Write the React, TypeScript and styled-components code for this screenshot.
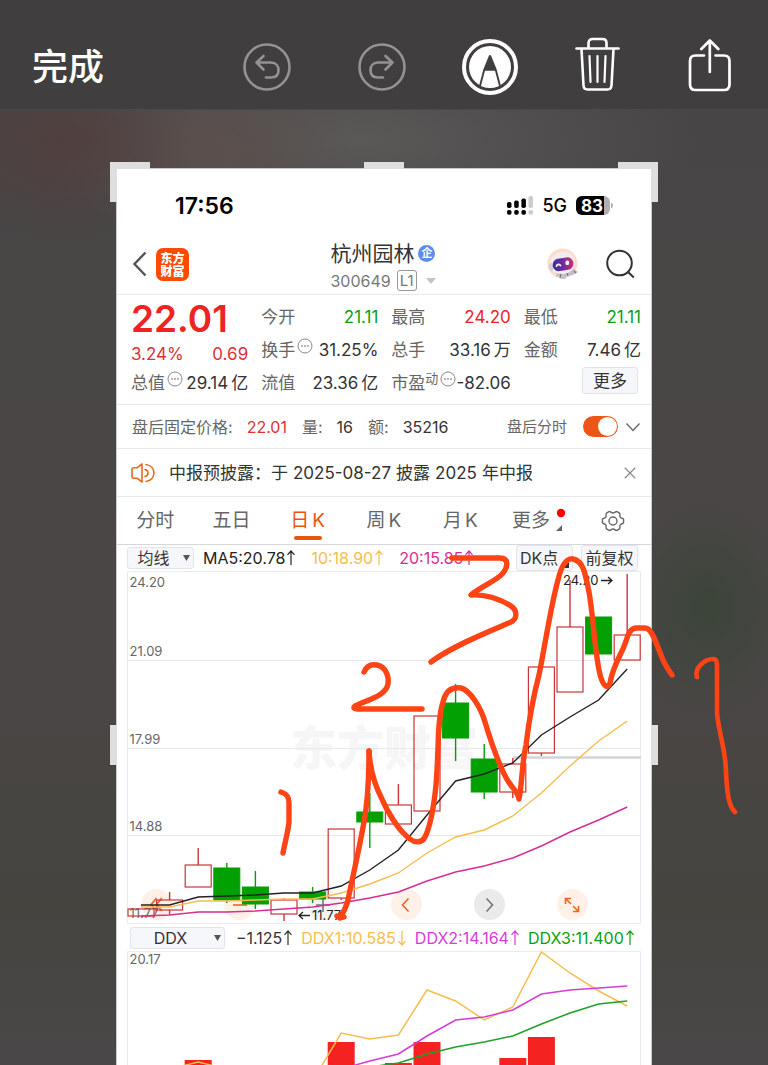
import React from "react";
import styled, { createGlobalStyle, css } from "styled-components";

const GlobalStyle = createGlobalStyle`
  *, *::before, *::after { box-sizing: border-box; }
  body {
    margin: 0;
    background: #464545;
    font-family: Inter, "Noto Sans CJK SC", sans-serif;
    color: #333;
  }
  button, select, input { font: inherit; color: inherit; margin: 0; }
`;

const RED = "#ef2224";
const GREEN = "#0aa010";
const ORANGE = "#ee5518";
const YELLOW = "#f6bd4e";
const MAGENTA = "#d52d96";
const VIOLET = "#d63bd8";
const INK = "#fe4415";

/* ---------- Editor shell ---------- */

const Page = styled.div`
  position: relative;
  min-height: 100vh;
  display: flex;
  flex-direction: column;
  overflow: hidden;
  background:
    radial-gradient(ellipse 90px 110px at 92% 57%, #3b4539 0%, transparent 100%),
    radial-gradient(ellipse 130px 100px at 8% 140px, #503f3e 0%, transparent 100%),
    radial-gradient(ellipse 150px 90px at 27% 150px, #5b4f4c 0%, transparent 100%),
    radial-gradient(ellipse 340px 120px at 46% 140px, #5a5958 0%, transparent 100%),
    linear-gradient(#474545 0, #4a4646 60%, #45443f 85%, #4a4748 100%);
`;

const Toolbar = styled.header`
  display: flex;
  align-items: center;
  height: 110px;
  padding: 24px 30px 0 32px;
  background: #403e3e;
  border-bottom: 1px solid #4b4a4a;
  color: #fff;
`;

const PlainButton = styled.button`
  display: flex;
  align-items: center;
  justify-content: center;
  padding: 0;
  border: 0;
  background: none;
  cursor: pointer;
`;

const DoneButton = styled(PlainButton)`
  margin-right: auto;
  font-size: 36px;
  line-height: 44px;
  font-weight: 500;
`;

const History = styled.div`
  display: flex;
  gap: 67px;
  margin-right: 56px;
  color: #949393;
`;

const Tools = styled.div`
  display: flex;
  gap: 54px;
`;

const Stage = styled.main`
  flex: 1;
  display: flex;
  padding: 59px 117px 0;
`;

const Phone = styled.article`
  position: relative;
  flex: 1;
  min-width: 0;
  display: flex;
  flex-direction: column;
  background: #fff;
  box-shadow: 0 0 0 1px #c9c8c8;
`;

const Handle = styled.span<{ $at: "tl" | "tr" | "top" | "left" | "right" }>`
  position: absolute;
  border: 0 solid #dfdede;
  ${({ $at }) =>
    $at === "tl" && css`left: -7px; top: -7px; width: 40px; height: 40px; border-width: 7px 0 0 7px;`}
  ${({ $at }) =>
    $at === "tr" && css`right: -7px; top: -7px; width: 40px; height: 40px; border-width: 7px 7px 0 0;`}
  ${({ $at }) =>
    $at === "top" && css`left: calc(50% - 20px); top: -7px; width: 40px; border-width: 7px 0 0;`}
  ${({ $at }) =>
    $at === "left" && css`left: -7px; top: 556px; height: 40px; border-width: 0 0 0 7px;`}
  ${({ $at }) =>
    $at === "right" && css`right: -7px; top: 556px; height: 40px; border-width: 0 7px 0 0;`}
`;

const Ink = styled.svg`
  position: absolute;
  inset: 0;
  width: 100%;
  height: auto;
  pointer-events: none;
`;

/* ---------- Phone header ---------- */

const StatusBar = styled.div`
  display: flex;
  align-items: center;
  justify-content: space-between;
  height: 65px;
  padding: 8px 38px 0 58px;
  color: #000;
`;

const Clock = styled.span`
  font-size: 23px;
  line-height: 28px;
  font-weight: 600;
`;

const Signals = styled.div`
  display: flex;
  align-items: center;
  gap: 9px;
  font-size: 18px;
  line-height: 24px;
  font-weight: 500;
`;

const Battery = styled.span`
  position: relative;
  width: 34px;
  height: 19px;
  border-radius: 6px;
  background: linear-gradient(90deg, #000 82%, #b0b0b0 82%);
  color: #fff;
  font-size: 17px;
  line-height: 20px;
  font-weight: 700;
  padding-left: 5px;
  margin-right: 3px;
  &::after {
    content: "";
    position: absolute;
    right: -3px;
    top: 7px;
    width: 2px;
    height: 5px;
    border-radius: 0 2px 2px 0;
    background: #b0b0b0;
  }
`;

const Rule = css`border-bottom: 1px solid #e9e9ed;`;

const TitleBar = styled.header`
  display: flex;
  align-items: center;
  height: 61px;
  padding: 0 16px 0 15px;
  ${Rule}
`;

const Side = styled.div<{ $end?: boolean }>`
  flex: 1;
  display: flex;
  align-items: center;
  gap: ${({ $end }) => ($end ? 28 : 9)}px;
  justify-content: ${({ $end }) => ($end ? "flex-end" : "flex-start")};
`;

const Logo = styled.span`
  width: 33px;
  height: 33px;
  border-radius: 7px;
  background: #fe4a05;
  color: #fff;
  font-size: 12px;
  line-height: 13px;
  font-weight: 900;
  padding-top: 4px;
  text-align: center;
`;

const Stock = styled.div`
  display: flex;
  flex-direction: column;
  padding-top: 5px;
`;

const StockName = styled.h1`
  display: flex;
  align-items: center;
  gap: 4px;
  margin: 0;
  font-size: 21px;
  line-height: 28px;
  font-weight: 400;
`;

const Badge = styled.span`
  width: 17px;
  height: 17px;
  border-radius: 50%;
  background: #5f8ee9;
  color: #fff;
  font-size: 11px;
  line-height: 16px;
  font-weight: 700;
  text-align: center;
`;

const StockCode = styled.div`
  display: flex;
  align-items: center;
  gap: 6px;
  font-size: 16px;
  line-height: 26px;
  color: #777;
`;

const Level = styled.span`
  border: 1px solid #999;
  border-radius: 3px;
  padding: 0 2px;
  font-size: 15px;
  line-height: 19px;
`;

/* ---------- Quote ---------- */

const Quote = styled.section`
  display: grid;
  grid-template-columns: repeat(4, 1fr);
  gap: 13px;
  height: 110px;
  padding: 5px 10px 0 14px;
  ${Rule}
`;

const QuoteColumn = styled.div`
  display: flex;
  flex-direction: column;
`;

const Cell = styled.div<{ $tone?: string }>`
  display: flex;
  align-items: center;
  justify-content: space-between;
  height: 33px;
  font-size: 17px;
  line-height: 24px;
  white-space: nowrap;
  color: ${({ $tone }) => $tone ?? "#333"};
`;

const Label = styled.span`
  color: #666;
  display: flex;
  align-items: center;
`;

const Unit = styled.span`
  margin-left: 3px;
`;

const Super = styled.sup`
  font-size: 13px;
  line-height: 14px;
  align-self: flex-start;
`;

const Price = styled.strong`
  height: 38px;
  font-size: 37px;
  line-height: 38px;
  font-weight: 600;
  color: ${RED};
`;

const Change = styled(Cell)`
  height: 28px;
  color: #e03034;
  padding-top: 4px;
`;

const Chip = styled.button<{ $wide?: boolean; $marked?: boolean }>`
  position: relative;
  display: flex;
  align-items: center;
  justify-content: center;
  border: 1px solid #e2e4ea;
  border-radius: 3px;
  background: #f6f7fb;
  padding: 0;
  cursor: pointer;
  color: #333;
  ${({ $wide }) =>
    $wide
      ? css`width: 56px; height: 27px; margin: 1px 3px 0 auto; font-size: 17px; line-height: 24px;`
      : css`width: 57px; height: 26px; font-size: 16px; line-height: 22px;`}
  ${({ $marked }) =>
    $marked &&
    css`
      justify-content: flex-start;
      padding-left: 3px;
      &::after {
        content: "";
        position: absolute;
        right: 3px;
        bottom: 2px;
        border: 3px solid #333;
        border-left-color: transparent;
        border-top-color: transparent;
      }
    `}
`;

/* ---------- After hours / notice ---------- */

const AfterHours = styled.section`
  display: flex;
  align-items: center;
  height: 44px;
  padding: 0 10px 0 15px;
  font-size: 16px;
  line-height: 22px;
  color: #666;
  white-space: nowrap;
  ${Rule}
`;

const Figure = styled.span<{ $tone?: string }>`
  margin: 0 15px 0 14px;
  color: ${({ $tone }) => $tone ?? "#333"};
`;

const SwitchLabel = styled.label`
  display: flex;
  align-items: center;
  gap: 16px;
  margin: 0 7px 0 auto;
  font-size: 15px;
`;

const Switch = styled.input`
  appearance: none;
  display: flex;
  width: 35px;
  height: 21px;
  padding: 1px;
  border-radius: 11px;
  background: ${ORANGE};
  cursor: pointer;
  &::before {
    content: "";
    width: 19px;
    height: 19px;
    margin-left: auto;
    border-radius: 50%;
    background: #fff;
  }
  &:not(:checked) { background: #ccc; }
  &:not(:checked)::before { margin-left: 0; }
`;

const Notice = styled.section`
  display: flex;
  align-items: center;
  height: 48px;
  padding: 0 15px 0 14px;
  font-size: 17px;
  line-height: 24px;
  white-space: nowrap;
  ${Rule}
`;

const NoticeText = styled.p`
  flex: 1;
  margin: 0 0 0 13px;
`;

const CloseButton = styled(PlainButton)`
  color: #888;
`;

const Num = styled.span`
  margin: 0 5px;
`;

/* ---------- Tabs ---------- */

const Tabs = styled.nav`
  display: grid;
  grid-template-columns: repeat(7, 1fr);
  height: 48px;
  border-bottom: 1px solid #d6d6de;
`;

const Tab = styled.button<{ $active?: boolean }>`
  position: relative;
  display: flex;
  align-items: center;
  justify-content: center;
  gap: 3px;
  padding: 0;
  border: 0;
  background: none;
  font-size: 19px;
  line-height: 26px;
  cursor: pointer;
  color: ${({ $active }) => ($active ? "#e8560e" : "#666")};
  ${({ $active }) =>
    $active &&
    css`
      &::after {
        content: "";
        position: absolute;
        bottom: 4px;
        width: 28px;
        height: 4px;
        border-radius: 2px;
        background: #e8560e;
      }
    `}
`;

const MoreTab = styled(Tab)`
  padding-left: 6px;
`;

const MoreMark = styled.svg`
  align-self: center;
  margin-left: 2px;
`;

/* ---------- Indicator bars ---------- */

const Indicators = styled.div<{ $tall?: boolean }>`
  display: flex;
  align-items: center;
  height: ${({ $tall }) => ($tall ? 27 : 26)}px;
  padding: 0 ${({ $tall }) => ($tall ? "0 0 13px" : "13px 0 10px")};
  font-size: 16px;
  line-height: 22px;
  white-space: nowrap;
`;

const SelectBox = styled.label<{ $wide?: boolean }>`
  position: relative;
  display: flex;
  flex: none;
  width: ${({ $wide }) => ($wide ? 95 : 67)}px;
  margin-right: ${({ $wide }) => ($wide ? 11 : 9)}px;
  svg {
    position: absolute;
    right: 4px;
    top: 8px;
    pointer-events: none;
  }
`;

const Select = styled.select`
  appearance: none;
  width: 100%;
  height: 22px;
  padding: 0 14px 0 0;
  border: 1px solid #e2e4ea;
  border-radius: 3px;
  background: #f6f7fb;
  line-height: 20px;
  text-align: center;
  text-align-last: center;
`;

const Reading = styled.span<{ $tone: string }>`
  display: flex;
  align-items: center;
  gap: 2px;
  margin-right: 9px;
  color: ${({ $tone }) => $tone};
`;

const MaReadings = styled.div`
  display: flex;
  flex: 1;
  gap: 7px;
`;

const Chips = styled.div`
  display: flex;
  gap: 8px;
`;

/* ---------- Charts ---------- */

const ChartFrame = styled.div`
  position: relative;
  margin: 0 10px;
`;

const ChartSvg = styled.svg`
  position: relative;
  display: block;
  width: 100%;
  height: auto;
  pointer-events: none;
  overflow: hidden;
  font-size: 13px;
`;

const Watermark = styled.span`
  position: absolute;
  left: 0;
  right: 0;
  top: 50%;
  margin-top: -34px;
  text-align: center;
  font-size: 47px;
  line-height: 68px;
  font-weight: 900;
  color: #f6f6f6;
`;

const ChartControls = styled.div`
  position: absolute;
  left: 14px;
  right: 53px;
  bottom: 4px;
  display: flex;
  justify-content: space-between;
`;

const RoundButton = styled(PlainButton)<{ $grey?: boolean; $faint?: boolean }>`
  width: 31px;
  height: 31px;
  border-radius: 50%;
  background: ${({ $grey, $faint }) => ($grey ? ($faint ? "#f3f3f3" : "#eaeaea") : "#fff0e8")};
  color: ${({ $grey }) => ($grey ? "#777" : "#ee6420")};
`;

const STEP = 28.6;
const cx = (i: number) => 14 + STEP * i;
const line = (values: number[], from = 0) =>
  values.map((y, i) => `${cx(i + from).toFixed(1)},${y}`).join(" ");

type Candle = { up: boolean; top: number; bottom: number; high: number; low: number };
const k = (up: boolean, top: number, bottom: number, high = top, low = bottom): Candle => ({
  up, top, bottom, high, low,
});

const candles: Candle[] = [
  k(true, 338, 345),
  k(true, 329, 339, 321, 344),
  k(true, 294, 316, 277),
  k(false, 297, 329, 292, 332),
  k(false, 316, 333, 300, 338),
  k(true, 329, 343, 327, 350),
  k(false, 321, 328, 316, 332),
  k(true, 258, 327, 258, 329),
  k(false, 241, 251, 222, 277),
  k(true, 234, 253, 213),
  k(true, 145, 240),
  k(false, 132, 167, 113, 190),
  k(false, 188, 221, 173, 228),
  k(true, 193, 221, 187, 227),
  k(true, 96, 182, 96, 185),
  k(true, 56, 121, 9),
  k(false, 46, 83),
  k(true, 64, 89, 3),
];

const ma5 = [334, 334, 326, 325, 324, 322, 322, 315, 299, 279, 244, 210, 203, 192, 164, 146, 129, 98];
const ma10 = [336, 336, 330, 330, 329, 328, 328, 322, 313, 302, 282, 266, 259, 245, 222, 195, 170, 150];
const ma20 = [345, 344, 341, 341, 340, 338, 336, 332, 327, 321, 310, 301, 295, 287, 275, 261, 249, 236];
const priceTicks = [
  { text: "24.20", y: 16 },
  { text: "21.09", y: 85 },
  { text: "17.99", y: 173 },
  { text: "14.88", y: 260 },
  { text: "11.77", y: 347 },
];

const ddx1 = [118, 111, 118, 140, 140, 130, 82, 88, 84, 39, 50, 69, 56, 1, 22, 40, 55];
const ddx2 = [118, 110, 103, 85, 69, 66, 59, 43, 39, 37, 35];
const ddx3 = [116, 112, 103, 96, 91, 85, 73, 62, 53, 50];
const ddxBars = [
  { i: 2, y: 109 },
  { i: 7, y: 91 },
  { i: 9, y: 112 },
  { i: 10, y: 91 },
  { i: 13, y: 107 },
  { i: 14, y: 86 },
];

function PriceChart() {
  return (
    <ChartSvg viewBox="0 0 514 353" role="img" aria-label="日K线">
      <path d="M.5 353V.5H513.5V353M0 352.5H514" fill="none" stroke="#ececf0" />
      <path d="M0 89.5H514M0 177.5H514M0 264.5H514" stroke="#e8e8f0" />
      <path d="M386 186.5H514" stroke="#d3d4da" strokeWidth="2.5" />
      {priceTicks.map((t) => (
        <text key={t.text} x="2.5" y={t.y} fill="#666">{t.text}</text>
      ))}
      {candles.map((c, i) =>
        c.up ? (
          <g key={i} stroke="#cb3538" fill="none">
            <path d={`M${cx(i)} ${c.high}V${c.top}M${cx(i)} ${c.bottom}V${c.low}`} strokeWidth="1.4" />
            <rect x={cx(i) - 13} y={c.top} width="26" height={c.bottom - c.top} strokeWidth="1.2" />
          </g>
        ) : (
          <g key={i} fill="#03a003" stroke="#03a003">
            <path d={`M${cx(i)} ${c.high}V${c.low}`} strokeWidth="1.4" />
            <rect x={cx(i) - 13} y={c.top} width="26" height={c.bottom - c.top} />
          </g>
        ),
      )}
      <polyline points={line(ma20)} fill="none" stroke={MAGENTA} strokeWidth="1.4" />
      <polyline points={line(ma10)} fill="none" stroke={YELLOW} strokeWidth="1.4" />
      <polyline points={line(ma5)} fill="none" stroke="#222" strokeWidth="1.4" />
      <g fill="none" stroke="#222" strokeWidth="1.3">
        <path d="M172 344.5H183M176 341L172 344.5L176 348" />
        <path d="M474 9.5H485M481 6L485 9.5L481 13" />
      </g>
      <text x="185" y="349" fill="#222">11.77</text>
      <text x="436" y="14" fill="#222">24.20</text>
    </ChartSvg>
  );
}

function DdxChart() {
  return (
    <ChartSvg viewBox="0 0 514 114" role="img" aria-label="DDX">
      <path d="M.5 114V.5H513.5V114" fill="none" stroke="#ececf0" />
      <text x="2.5" y="13" fill="#666">20.17</text>
      {ddxBars.map((b) => (
        <rect key={b.i} x={cx(b.i) - 13.5} y={b.y} width="27" height={120 - b.y} fill="#f52222" />
      ))}
      <g fill="none" strokeWidth="1.5">
        <polyline points={line(ddx1, 1)} stroke={YELLOW} />
        <polyline points={line(ddx2, 7)} stroke={VIOLET} />
        <polyline points={line(ddx3, 8)} stroke="#1fa028" />
      </g>
    </ChartSvg>
  );
}

/* ---------- Icons ---------- */

const Arrow = ({ down }: { down?: boolean }) => (
  <svg width="8" height="16" viewBox="0 0 8 16" fill="none" stroke="currentColor" strokeWidth="1.2">
    <path d={down ? "M4 1V15M.5 11.2L4 15L7.5 11.2" : "M4 15V1M.5 4.8L4 1L7.5 4.8"} />
  </svg>
);

const Caret = () => (
  <svg width="7" height="6" viewBox="0 0 7 6"><path d="M0 0H7L3.5 6Z" fill="#555" /></svg>
);

const Dots = () => (
  <svg width="18" height="24" viewBox="0 0 18 24" fill="none" stroke="#888">
    <circle cx="10" cy="8" r="7" />
    <path d="M6.2 8H7.8M9.2 8H10.8M12.2 8H13.8" strokeWidth="1.5" />
  </svg>
);

const HistoryIcon = ({ flip }: { flip?: boolean }) => (
  <svg width="48" height="48" viewBox="0 0 48 48" fill="none" stroke="currentColor" strokeWidth="2.6" strokeLinecap="round" strokeLinejoin="round">
    <circle cx="24" cy="24" r="22.5" />
    <g transform={flip ? "matrix(-1 0 0 1 48 0)" : undefined}>
      <path d="M20.5 13L13.5 19.5L20.5 26.5M13.5 19.5H28C33 19.5 35.5 23 35.5 27C35.5 31.5 33 34.5 28 34.5H23" />
    </g>
  </svg>
);

const MarkerIcon = () => (
  <svg width="56" height="56" viewBox="0 0 56 56">
    <circle cx="28" cy="28" r="26" fill="none" stroke="#fff" strokeWidth="4" />
    <circle cx="28" cy="28" r="21" fill="#fff" />
    <path d="M28 16.5L22.3 30.5L18 47M28 16.5L33.7 30.5L38 47M22 30.5H34" fill="none" stroke="#403e3e" strokeWidth="1.9" />
    <path d="M28 16L22 31.5H34Z" fill="#403e3e" />
  </svg>
);

const TrashIcon = () => (
  <svg width="56" height="56" viewBox="0 3 56 56" fill="none" stroke="#fff" strokeWidth="2.6" strokeLinecap="round" strokeLinejoin="round">
    <path d="M4.5 12.5H46.5" />
    <path d="M16.5 12V7C16.5 4.5 18 3 20.5 3H30.5C33 3 34.5 4.5 34.5 7V12" />
    <path d="M9.5 13L11.5 49.5C11.7 52 13 53.5 15.5 53.5H35.5C38 53.5 39.3 52 39.5 49.5L41.5 13" />
    <path d="M17.5 20L18.5 46M25.5 20V46M33.5 20L32.5 46" strokeWidth="2.2" />
  </svg>
);

const TrashSvg = styled.span`
  display: flex;
  svg { overflow: visible; }
`;

const ShareIcon = () => (
  <svg width="56" height="56" viewBox="0 3 56 56" fill="none" stroke="#fff" strokeWidth="2.7" strokeLinecap="round" strokeLinejoin="round">
    <path d="M22 19.5H13.5C10 19.5 8 21.5 8 25V48.5C8 52 10 54 13.5 54H42C45.5 54 47.5 52 47.5 48.5V25C47.5 21.5 45.5 19.5 42 19.5H33.5" />
    <path d="M27.8 36V4.5M19.3 13L27.8 4.5L36.3 13" />
  </svg>
);

const SignalIcon = () => (
  <svg width="26" height="19" viewBox="0 0 26 19">
    <g fill="#000">
      <rect x="0" y="6" width="4.5" height="6" rx="1.8" />
      <rect x="7.2" y="4.5" width="4.5" height="7.5" rx="1.8" />
      <rect x="14.4" y="2.5" width="4.5" height="9.5" rx="1.8" />
      <rect x="0" y="14" width="4.5" height="4.8" rx="1.8" />
      <rect x="7.2" y="14" width="4.5" height="4.8" rx="1.8" />
      <rect x="14.4" y="14" width="4.5" height="4.8" rx="1.8" />
    </g>
    <g fill="#ccc">
      <rect x="21.5" y="0" width="4.5" height="12" rx="1.8" />
      <rect x="21.5" y="14" width="4.5" height="4.8" rx="1.8" />
    </g>
  </svg>
);

const RobotIcon = () => (
  <svg width="31" height="32" viewBox="0 0 31 32">
    <defs>
      <linearGradient id="visor" x1="0" y1="0" x2="1" y2="0">
        <stop offset="0" stopColor="#3b2c9c" />
        <stop offset="0.5" stopColor="#6d2ba0" />
        <stop offset="1" stopColor="#d6336c" />
      </linearGradient>
    </defs>
    <circle cx="15.5" cy="15.5" r="15" fill="#fddccb" />
    <path d="M10 24L9 29L12 28L14 31L18 31L20 28L26 27L31 24L27 21Z" fill="#c4bfc6" />
    <path d="M14 25L13 30M20 25L21 28M27 23L29 25" stroke="#77727c" strokeWidth="1.2" />
    <ellipse cx="15.5" cy="15" rx="12.5" ry="11" fill="#efedf2" transform="rotate(-8 15.5 15.5)" />
    <ellipse cx="4" cy="19" rx="2.5" ry="4" fill="#d4d0d8" />
    <rect x="5.5" y="10" width="21" height="12.5" rx="6.2" fill="url(#visor)" transform="rotate(-9 16 16)" />
    <path d="M9.5 18.2C10 16 12.5 15.8 13.5 17.5" fill="none" stroke="#fff" strokeWidth="1.7" strokeLinecap="round" />
    <rect x="18.5" y="12.5" width="3.6" height="4.6" rx="1.5" fill="#fff" />
  </svg>
);

const SearchIcon = () => (
  <svg width="29" height="30" viewBox="0 0 29 30" fill="none" stroke="#333" strokeWidth="2">
    <circle cx="13.5" cy="14" r="12.3" />
    <path d="M21.5 22.5L27.8 28.5" />
  </svg>
);

const SpeakerIcon = () => (
  <svg width="25" height="20" viewBox="0 0 25 20" fill="none" stroke="#e86a1c" strokeWidth="1.6" strokeLinejoin="round" strokeLinecap="round">
    <path d="M11 1V19L6 15.2H3C1.7 15.2 1 14.5 1 13.2V6.8C1 5.5 1.7 4.8 3 4.8H6Z" />
    <path d="M14 6.5C18 7.5 18 12.5 14 13.5M15 1.5C25.5 3 25.5 17 15 18.5" />
  </svg>
);

const GearIcon = () => (
  <svg width="24" height="22" viewBox="0 0 24 22" fill="none" stroke="#666" strokeWidth="1.4" strokeLinejoin="round">
    <path d="M8 1.6C9.5 1 10 3 12 3S14.5 1 16 1.6L18.5 3.1C19.6 4.2 18.2 5.5 19.2 7.1C20 8.6 22.3 8 22.6 9.5V12.5C22.3 14 20 13.4 19.2 14.9C18.2 16.5 19.6 17.8 18.5 18.9L16 20.4C14.5 21 14 19 12 19S9.5 21 8 20.4L5.5 18.9C4.4 17.8 5.8 16.5 4.8 14.9C4 13.4 1.7 14 1.4 12.5V9.5C1.7 8 4 8.6 4.8 7.1C5.8 5.5 4.4 4.2 5.5 3.1Z" />
    <circle cx="12" cy="11" r="4" />
  </svg>
);

const Stroke = ({ d, size = 16, width = 1.6 }: { d: string; size?: number; width?: number }) => (
  <svg width={size} height={size} viewBox="0 0 16 16" fill="none" stroke="currentColor" strokeWidth={width}>
    <path d={d} />
  </svg>
);

/* ---------- Page ---------- */

export default function App() {
  return (
    <Page>
      <GlobalStyle />
      <Toolbar>
        <DoneButton>完成</DoneButton>
        <History>
          <PlainButton aria-label="撤销"><HistoryIcon /></PlainButton>
          <PlainButton aria-label="重做"><HistoryIcon flip /></PlainButton>
        </History>
        <Tools>
          <PlainButton aria-label="标记"><MarkerIcon /></PlainButton>
          <PlainButton aria-label="删除"><TrashSvg><TrashIcon /></TrashSvg></PlainButton>
          <PlainButton aria-label="共享"><ShareIcon /></PlainButton>
        </Tools>
      </Toolbar>

      <Stage>
        <Phone>
          <Handle $at="tl" />
          <Handle $at="top" />
          <Handle $at="tr" />
          <Handle $at="left" />
          <Handle $at="right" />

          <StatusBar>
            <Clock>17:56</Clock>
            <Signals>
              <SignalIcon />
              <span>5G</span>
              <Battery>83</Battery>
            </Signals>
          </StatusBar>

          <TitleBar>
            <Side>
              <PlainButton aria-label="返回">
                <svg width="15" height="26" viewBox="0 0 15 26" fill="none" stroke="#555" strokeWidth="2.4">
                  <path d="M13.5 1.5L2.5 13L13.5 24.5" />
                </svg>
              </PlainButton>
              <Logo>东方<br />财富</Logo>
            </Side>
            <Stock>
              <StockName>杭州园林<Badge>企</Badge></StockName>
              <StockCode>
                300649<Level>L1</Level>
                <svg width="14" height="6" viewBox="0 0 14 6"><path d="M3 0H13L8 6Z" fill="#c4c4c4" /></svg>
              </StockCode>
            </Stock>
            <Side $end>
              <PlainButton aria-label="智能助手"><RobotIcon /></PlainButton>
              <PlainButton aria-label="搜索"><SearchIcon /></PlainButton>
            </Side>
          </TitleBar>

          <Quote>
            <QuoteColumn>
              <Price>22.01</Price>
              <Change><span>3.24%</span><span>0.69</span></Change>
              <Cell><Label>总值<Dots /></Label><span>29.14<Unit>亿</Unit></span></Cell>
            </QuoteColumn>
            <QuoteColumn>
              <Cell $tone={GREEN}><Label>今开</Label>21.11</Cell>
              <Cell><Label>换手<Dots /></Label>31.25%</Cell>
              <Cell><Label>流值</Label><span>23.36<Unit>亿</Unit></span></Cell>
            </QuoteColumn>
            <QuoteColumn>
              <Cell $tone={RED}><Label>最高</Label>24.20</Cell>
              <Cell><Label>总手</Label><span>33.16<Unit>万</Unit></span></Cell>
              <Cell><Label>市盈<Super>动</Super><Dots /></Label>-82.06</Cell>
            </QuoteColumn>
            <QuoteColumn>
              <Cell $tone={GREEN}><Label>最低</Label>21.11</Cell>
              <Cell><Label>金额</Label><span>7.46<Unit>亿</Unit></span></Cell>
              <Chip $wide>更多</Chip>
            </QuoteColumn>
          </Quote>

          <AfterHours>
            盘后固定价格:<Figure $tone="#e03034">22.01</Figure>
            量:<Figure>16</Figure>
            额:<Figure>35216</Figure>
            <SwitchLabel>盘后分时<Switch type="checkbox" defaultChecked /></SwitchLabel>
            <PlainButton aria-label="展开"><Stroke d="M1.5 4.5L8 11.5L14.5 4.5" width={1.3} /></PlainButton>
          </AfterHours>

          <Notice>
            <SpeakerIcon />
            <NoticeText>
              中报预披露：于<Num>2025-08-27</Num>披露<Num>2025</Num>年中报
            </NoticeText>
            <CloseButton aria-label="关闭"><Stroke d="M1 1L15 15M15 1L1 15" size={12} /></CloseButton>
          </Notice>

          <Tabs>
            <Tab>分时</Tab>
            <Tab>五日</Tab>
            <Tab $active>日<span>K</span></Tab>
            <Tab>周<span>K</span></Tab>
            <Tab>月<span>K</span></Tab>
            <MoreTab>
              更多
              <MoreMark width="12" height="26" viewBox="0 0 12 26">
                <circle cx="6" cy="5" r="4.2" fill="#f00" />
                <path d="M7 17V23H1Z" fill="#666" />
              </MoreMark>
            </MoreTab>
            <Tab aria-label="设置"><GearIcon /></Tab>
          </Tabs>

          <Indicators>
            <SelectBox>
              <Select aria-label="主图指标"><option>均线</option></Select>
              <Caret />
            </SelectBox>
            <MaReadings>
              <Reading $tone="#222">MA5:20.78<Arrow /></Reading>
              <Reading $tone={YELLOW}>10:18.90<Arrow /></Reading>
              <Reading $tone={MAGENTA}>20:15.85<Arrow /></Reading>
            </MaReadings>
            <Chips>
              <Chip $marked>DK点</Chip>
              <Chip>前复权</Chip>
            </Chips>
          </Indicators>

          <ChartFrame>
            <Watermark>东方财富</Watermark>
            <ChartControls>
              <RoundButton aria-label="最左"><Stroke d="M8 2L3 8L8 14M13 2L8 8L13 14" size={17} /></RoundButton>
              <RoundButton aria-label="缩小"><Stroke d="M1 8H15" /></RoundButton>
              <RoundButton $grey $faint aria-label="放大"><Stroke d="M1 8H15M8 1V15" /></RoundButton>
              <RoundButton aria-label="向左"><Stroke d="M10.5 1.5L4.5 8L10.5 14.5" /></RoundButton>
              <RoundButton $grey aria-label="向右"><Stroke d="M5.5 1.5L11.5 8L5.5 14.5" /></RoundButton>
              <RoundButton aria-label="全屏">
                <Stroke d="M7 1.5H1.5V7M1.5 1.5L7 7M9 14.5H14.5V9M14.5 14.5L9 9" />
              </RoundButton>
            </ChartControls>
            <PriceChart />
          </ChartFrame>

          <Indicators $tall>
            <SelectBox $wide>
              <Select aria-label="副图指标"><option>DDX</option></Select>
              <Caret />
            </SelectBox>
            <Reading $tone="#333">−1.125<Arrow /></Reading>
            <Reading $tone={YELLOW}>DDX1:10.585<Arrow down /></Reading>
            <Reading $tone={VIOLET}>DDX2:14.164<Arrow /></Reading>
            <Reading $tone={GREEN}>DDX3:11.400<Arrow /></Reading>
          </Indicators>

          <ChartFrame>
            <DdxChart />
          </ChartFrame>
        </Phone>
      </Stage>

      <Ink viewBox="0 0 768 1065" fill="none" stroke={INK} strokeWidth="5.4" strokeLinecap="round" strokeLinejoin="round" aria-hidden="true">
        <path d="M281 792C287 794 289 797 289 803V822C288 832 285 842 283 853" />
        <path d="M364 672C367 665 372 664 377 665C387 667 389 678 388 684C386 696 367 700 355 706C353 708 354 709 357 709H422" />
        <path d="M452 558H500C509 558 508 567 503 573C498 580 480 587 471 595C488 594 503 601 511 606C518 611 517 619 511 622C490 631 452 646 431 662" />
        <path d="M369 751C369 775 368 800 364 822C359 850 352 880 348 900C346 908 343 913 340 918L344 917M340 918L337 916" />
        <path d="M369 751C370 770 375 785 381 797C388 813 399 831 410 839C415 843 422 843 425 837C430 827 434 805 436 785C439 750 437 720 443 702C446 689 454 687 461 688C470 690 481 708 485 722C492 745 500 768 508 781C513 789 518 792 519 799C522 785 522 762 526 745C530 712 535 690 539 675C546 640 551 605 558 580C562 563 567 558 573 559C583 561 585 572 589 592C594 620 595 660 601 678C604 687 608 689 610 683C612 671 616 663 621 653C628 640 627 629 636 628H645C652 628 656 643 661 655C664 664 667 668 672 675" />
        <path d="M697 677C694 668 705 659 713 659C716 659 717 661 717 665V713C719 735 726 750 726 773C727 785 727 805 735 812" strokeWidth="4.6" />
      </Ink>
    </Page>
  );
}
